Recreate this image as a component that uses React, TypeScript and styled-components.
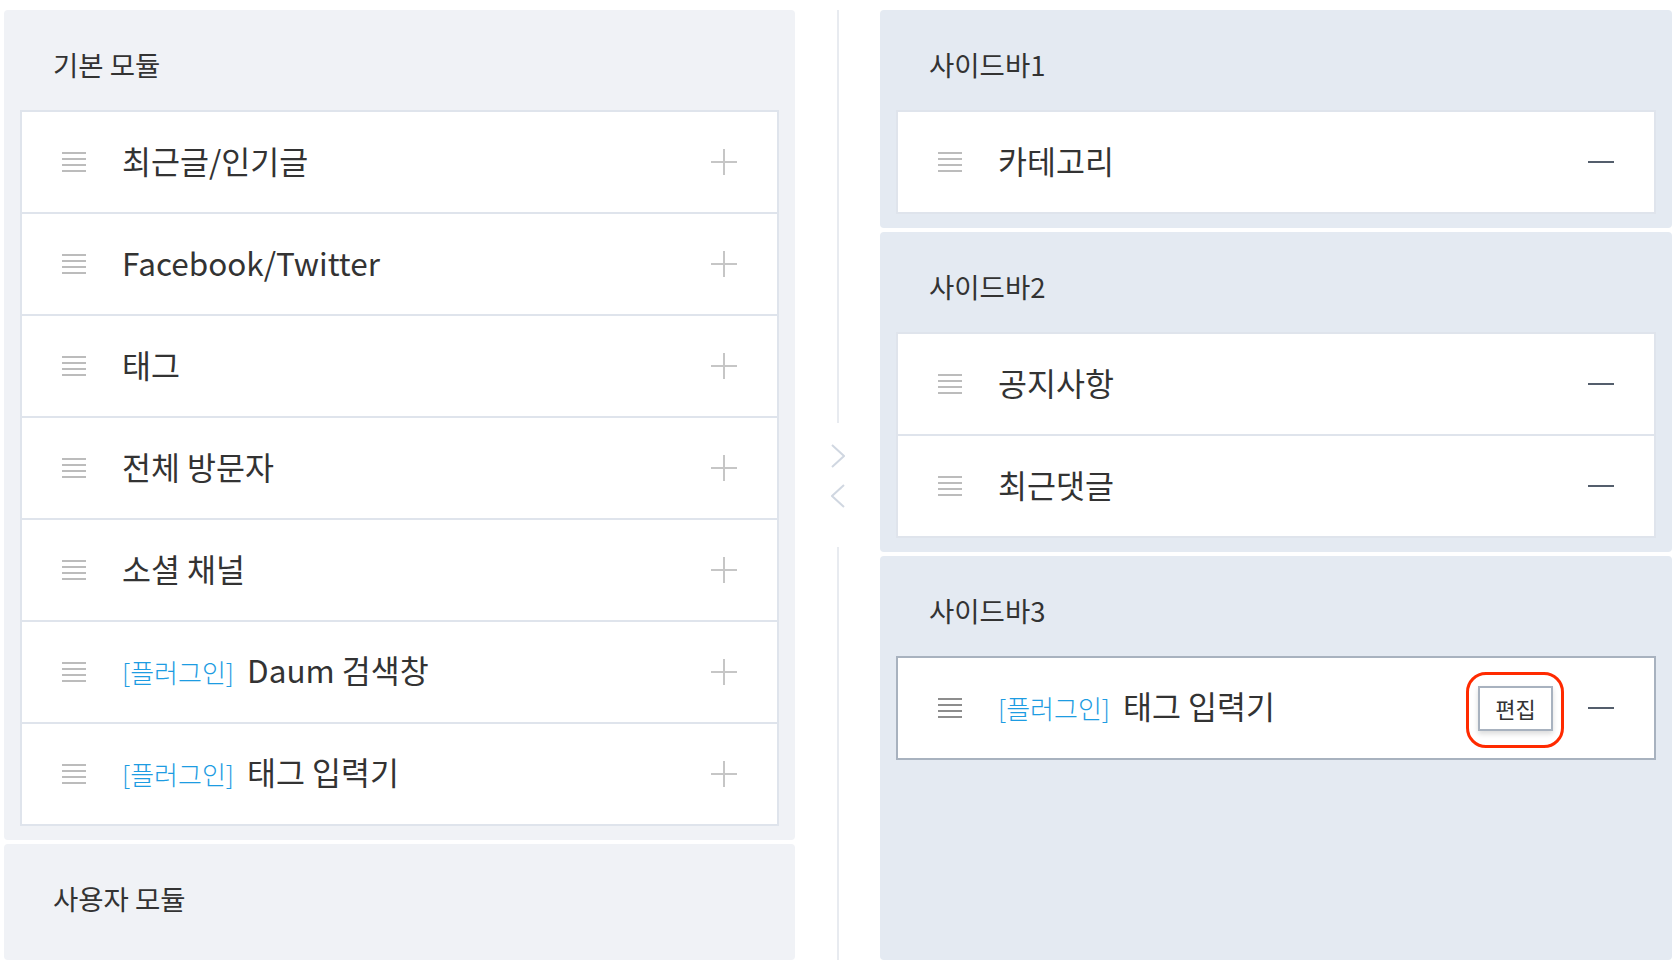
import { Fragment } from "react";
import styled, { createGlobalStyle } from "styled-components";

const GlobalStyle = createGlobalStyle`
  html,
  body {
    margin: 0;
    padding: 0;
    background: #ffffff;
  }

  body {
    font-family: "Noto Sans CJK KR", "Noto Sans", sans-serif;
    color: #333333;
  }
`;

const Page = styled.div`
  box-sizing: border-box;
  height: 964px;
  padding: 10px 8px 4px 4px;

  display: grid;
  grid-template-columns: 791px 85px 792px;
  overflow: hidden;
`;

const Column = styled.div`
  display: flex;
  flex-direction: column;
  gap: 4px;
  min-height: 0;
`;

const Panel = styled.section<{ $tone: "gray" | "blue"; $grow?: boolean }>`
  box-sizing: border-box;
  padding: 0 16px 14px;
  border-radius: 4px;
  background: ${(props) => (props.$tone === "blue" ? "#e4eaf2" : "#f0f2f6")};
  flex: ${(props) => (props.$grow ? "1 1 auto" : "none")};
`;

const PanelTitle = styled.h2`
  box-sizing: border-box;
  height: 100px;
  margin: 0;
  padding: 39px 0 0 33px;

  font-size: 27.5px;
  font-weight: 400;
  line-height: 30px;
  color: #333333;
`;

const List = styled.ul<{ $focused?: boolean }>`
  margin: 0;
  padding: 0;
  list-style: none;

  background: #ffffff;
  border: 2px solid ${(props) => (props.$focused ? "#a8b2bf" : "#dfe4ec")};
`;

const Row = styled.li`
  display: flex;
  align-items: center;
  box-sizing: border-box;
  height: 100px;
  padding: 0 40px 0 40px;

  & + & {
    height: 102px;
    border-top: 2px solid #dfe4ec;
  }
`;

const Label = styled.span`
  flex: 1;
  margin-left: 36px;
  padding-bottom: 4px;

  font-size: 31.5px;
  font-weight: 400;
  line-height: 40px;
  color: #333333;
  white-space: nowrap;
`;

const PluginTag = styled.span`
  margin-right: 13px;
  font-size: 26px;
  font-weight: 300;
  color: #1d9ce2;
`;

const EditButton = styled.button`
  position: relative;
  box-sizing: border-box;
  width: 75px;
  height: 45px;
  margin-right: 35px;
  padding: 0;

  background: #ffffff;
  border: 2px solid #a8b2bf;
  box-shadow: 0 3px 5px rgba(0, 0, 0, 0.14);

  font-family: inherit;
  font-size: 22px;
  color: #333333;
  cursor: pointer;
`;

// 빨간 강조 표시 (스크린샷 주석)
const Highlight = styled.span`
  position: absolute;
  top: -16px;
  left: -14px;
  right: -13px;
  bottom: -19px;

  border: 3px solid #ff2a00;
  border-radius: 20px;
  pointer-events: none;
`;

const Divider = styled.div`
  display: flex;
  flex-direction: column;
  align-items: center;
`;

const DividerLine = styled.div`
  flex: 1;
  width: 2px;
  background: #e8ebf0;
`;

const ArrowBox = styled.div`
  display: flex;
  flex-direction: column;
  gap: 16px;
  padding: 21px 0 39px;
`;

const Grip = ({ dark }: { dark?: boolean }) => {
  const color = dark ? "#8d8d8d" : "#bcbcbc";
  return (
    <svg width="24" height="20" viewBox="0 0 24 20">
      {[1, 7, 13, 19].map((y) => (
        <line key={y} x1="0" x2="24" y1={y} y2={y} stroke={color} strokeWidth="2" />
      ))}
    </svg>
  );
};

const PlusIcon = () => {
  return (
    <svg width="26" height="26" viewBox="0 0 26 26">
      <line x1="0" x2="26" y1="13" y2="13" stroke="#c6c6c6" strokeWidth="2" />
      <line x1="13" x2="13" y1="0" y2="26" stroke="#c6c6c6" strokeWidth="2" />
    </svg>
  );
};

const MinusIcon = () => {
  return (
    <svg width="26" height="26" viewBox="0 0 26 26">
      <line x1="0" x2="26" y1="13" y2="13" stroke="#545e6c" strokeWidth="2" />
    </svg>
  );
};

const Chevron = ({ dir }: { dir: "left" | "right" }) => {
  return (
    <svg width="14" height="24" viewBox="0 0 14 24">
      <polyline
        points={dir === "right" ? "1,1 13,12 1,23" : "13,1 1,12 13,23"}
        fill="none"
        stroke="#d0d7e1"
        strokeWidth="2"
      />
    </svg>
  );
};

interface ModuleItem {
  name: string;
  plugin?: boolean;
  editable?: boolean;
}

const basicModules: ModuleItem[] = [
  { name: "최근글/인기글" },
  { name: "Facebook/Twitter" },
  { name: "태그" },
  { name: "전체 방문자" },
  { name: "소셜 채널" },
  { name: "Daum 검색창", plugin: true },
  { name: "태그 입력기", plugin: true },
];

const sidebars: { title: string; items: ModuleItem[]; focused?: boolean }[] = [
  { title: "사이드바1", items: [{ name: "카테고리" }] },
  { title: "사이드바2", items: [{ name: "공지사항" }, { name: "최근댓글" }] },
  {
    title: "사이드바3",
    items: [{ name: "태그 입력기", plugin: true, editable: true }],
    focused: true,
  },
];

const ItemLabel = ({ item }: { item: ModuleItem }) => {
  return (
    <Label>
      {item.plugin && <PluginTag>[플러그인]</PluginTag>}
      {item.name}
    </Label>
  );
};

const App = () => {
  return (
    <>
      <GlobalStyle />
      <Page>
        <Column>
          <Panel $tone="gray">
            <PanelTitle>기본 모듈</PanelTitle>
            <List>
              {basicModules.map((item) => {
                return (
                  <Row key={item.name + (item.plugin ? "-p" : "")}>
                    <Grip />
                    <ItemLabel item={item} />
                    <PlusIcon />
                  </Row>
                );
              })}
            </List>
          </Panel>
          <Panel $tone="gray" $grow>
            <PanelTitle>사용자 모듈</PanelTitle>
          </Panel>
        </Column>

        <Divider>
          <DividerLine />
          <ArrowBox>
            <Chevron dir="right" />
            <Chevron dir="left" />
          </ArrowBox>
          <DividerLine />
        </Divider>

        <Column>
          {sidebars.map((sidebar, index) => {
            return (
              <Panel
                key={sidebar.title}
                $tone="blue"
                $grow={index === sidebars.length - 1}
              >
                <PanelTitle>{sidebar.title}</PanelTitle>
                <List $focused={sidebar.focused}>
                  {sidebar.items.map((item) => {
                    return (
                      <Row key={item.name}>
                        <Grip dark={sidebar.focused} />
                        <ItemLabel item={item} />
                        {item.editable && (
                          <Fragment>
                            <EditButton>
                              편집
                              <Highlight />
                            </EditButton>
                          </Fragment>
                        )}
                        <MinusIcon />
                      </Row>
                    );
                  })}
                </List>
              </Panel>
            );
          })}
        </Column>
      </Page>
    </>
  );
};

export default App;
